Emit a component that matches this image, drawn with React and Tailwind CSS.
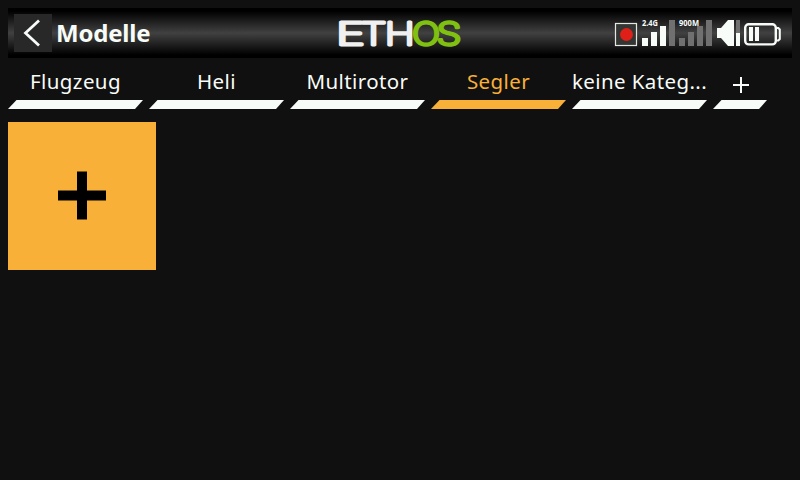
const tabs = [
  { label: 'Flugzeug' },
  { label: 'Heli' },
  { label: 'Multirotor' },
  { label: 'Segler', active: true },
  { label: 'keine Kateg...' },
];

function Tab({ label, active }) {
  return (
    <button className={`flex h-[51px] w-[135px] flex-col items-center ${active ? 'text-[#f9b038]' : 'text-[#f8fcf8]'}`}>
      <span className="h-[42px] whitespace-nowrap text-[20.5px] leading-[47px] tracking-[0.4px]">{label}</span>
      <svg className="block shrink-0" width="135" height="9" viewBox="0 0 135 9">
        <path d="M8.5 0H135L127 9H0Z" fill="currentColor" />
      </svg>
    </button>
  );
}

function Logo() {
  return (
    <svg className="block" width="134" height="50" viewBox="333 8 134 50" fontFamily="Inter, sans-serif" fontWeight="200" fontSize="31.5" strokeWidth="2.8" strokeLinejoin="round" aria-label="ETHOS">
      <g fill="#f0f0f0" stroke="#f0f0f0">
        <text x="336" y="44.5" textLength="29" lengthAdjust="spacingAndGlyphs">E</text>
        <text x="360.5" y="44.5" textLength="26" lengthAdjust="spacingAndGlyphs">T</text>
        <text x="384.7" y="44.5" textLength="30" lengthAdjust="spacingAndGlyphs">H</text>
      </g>
      <g fill="#80c010" stroke="#80c010">
        <text x="412" y="44.5" textLength="28" lengthAdjust="spacingAndGlyphs">O</text>
        <text x="436.5" y="44.5" textLength="25" lengthAdjust="spacingAndGlyphs">S</text>
      </g>
    </svg>
  );
}

function StatusIcons() {
  return (
    <svg className="block" width="170" height="50" viewBox="613 8 170 50" fontFamily="'Noto Sans', sans-serif">
      <rect x="615.5" y="23.5" width="21" height="22" fill="#343634" stroke="#e4e8e4" strokeWidth="1.2" />
      <circle cx="626.5" cy="34.5" r="6.4" fill="#e02018" />
      <g fill="#f8fcf8">
        <rect x="642" y="38" width="6" height="8" />
        <rect x="651" y="32" width="6" height="14" />
        <rect x="660" y="26" width="6" height="20" />
      </g>
      <g fill="#707070">
        <rect x="669" y="20" width="6" height="26" />
        <rect x="679" y="38" width="6" height="8" />
        <rect x="688" y="32" width="6" height="14" />
        <rect x="697" y="26" width="6" height="20" />
        <rect x="706" y="20" width="6" height="26" />
      </g>
      <g fill="#f8fcf8" fontSize="8" fontWeight="700">
        <text x="642" y="26" textLength="16" lengthAdjust="spacingAndGlyphs">2.4G</text>
        <text x="679" y="26" textLength="20" lengthAdjust="spacingAndGlyphs">900M</text>
      </g>
      <path d="M717 28H721L728 20H734V46H728L721 38H717Z" fill="#f8fcf8" />
      <rect x="736" y="20" width="4" height="26" fill="#707070" />
      <rect x="736" y="33" width="4" height="13" fill="#f8fcf8" />
      <g fill="none" stroke="#f8fcf8" strokeWidth="2.4">
        <rect x="745.2" y="24.2" width="30.6" height="20.2" rx="3.5" />
        <path d="M776 28H778.3L779.8 29.5V39L778.3 40.5H776" strokeWidth="2" />
      </g>
      <rect x="749" y="27" width="4" height="14" fill="#f8fcf8" />
      <rect x="755" y="27" width="4" height="14" fill="#f8fcf8" />
    </svg>
  );
}

export default function App() {
  return (
    <div className="h-[480px] w-[800px] overflow-hidden bg-[#101010] px-2 pt-2 font-['Noto_Sans',sans-serif]">
      <header className="grid h-[50px] grid-cols-[325px_134px_146px_170px] bg-[linear-gradient(to_bottom,#000_0%,#000_6%,#404140_50%,#000_94%,#000_100%)]">
        <div className="flex items-center pl-1.5">
          <button className="h-[38px] w-[38px] bg-[#282828]">
            <svg className="block" width="38" height="38" viewBox="0 0 38 38">
              <path d="M25 6.5L11.5 19L25 31.5" fill="none" stroke="#f8fcf8" strokeWidth="2.8" />
            </svg>
          </button>
          <h1 className="ml-1 text-[24px] leading-[50px] font-bold tracking-[-0.2px] text-[#f8fcf8]">Modelle</h1>
        </div>
        <Logo />
        <div />
        <StatusIcons />
      </header>
      <nav className="flex h-[64px] gap-1.5">
        {tabs.map((tab) => (
          <Tab key={tab.label} {...tab} />
        ))}
        <button className="flex h-[51px] w-[54px] flex-col items-center justify-between text-[#f8fcf8]">
          <svg className="mt-[19px] ml-[2px] block" width="16" height="16" viewBox="0 0 16 16">
            <path d="M0 8H16M8 0V16" stroke="currentColor" strokeWidth="2" />
          </svg>
          <svg className="block shrink-0" width="54" height="9" viewBox="0 0 54 9">
            <path d="M8.5 0H54L46 9H0Z" fill="currentColor" />
          </svg>
        </button>
      </nav>
      <main>
        <button className="block h-[148px] w-[148px] bg-[#f9b038]">
          <svg className="block" width="148" height="148" viewBox="0 0 148 148">
            <path d="M50 73.5H98M74 49.5V97.5" stroke="#000" strokeWidth="10" />
          </svg>
        </button>
      </main>
    </div>
  );
}
